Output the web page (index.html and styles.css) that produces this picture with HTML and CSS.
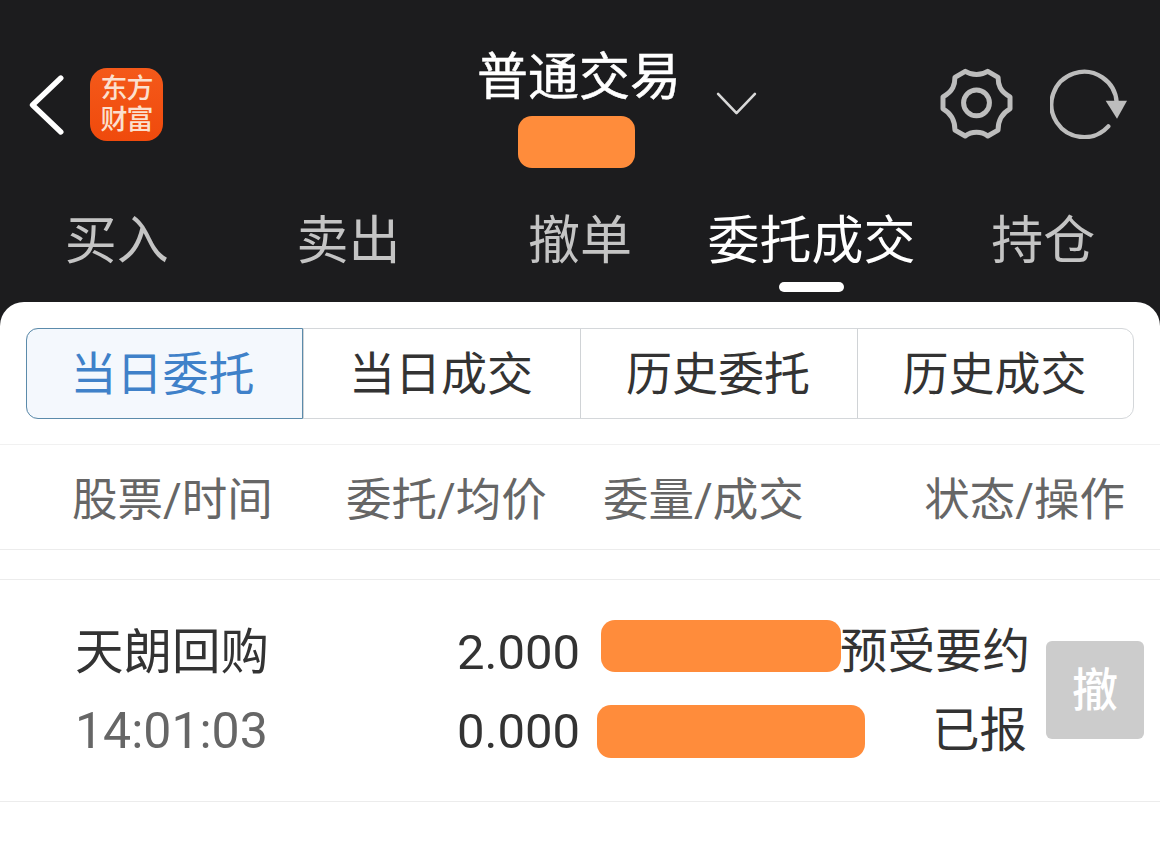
FILE: index.html
```html
<!DOCTYPE html>
<html lang="zh-CN">
<head>
    <meta charset="UTF-8">
    <meta name="viewport" content="width=device-width, initial-scale=1.0">
    <title>普通交易</title>
    <link rel="stylesheet" href="styles.css">
</head>
<body>
<div class="page">
    <header class="topbar">
        <div class="nav-left">
            <svg class="icon-back" viewBox="85 105 110 180"><path d="M183 114 L98 195 L183 276"/></svg>
            <div class="logo"><span>东方</span><span>财富</span></div>
        </div>
        <div class="title-box">
            <div class="title">普通交易</div>
            <div class="mask mask-account"></div>
        </div>
        <svg class="icon-down" viewBox="76 122 128 76"><path d="M84 131 L140 189 L196 131"/></svg>
        <div class="nav-right">
            <svg class="icon-gear" viewBox="750 56 220 212">
                <path d="M826 65 C845 78 875 78 894 65 L925 83 C925 105 930 125 961 142 L961 178 C930 195 925 220 925 242 L894 260 C875 245 845 245 826 260 L795 242 C795 220 790 195 759 178 L759 142 C790 125 795 105 795 83 Z"/>
                <circle cx="860" cy="160" r="39"/>
            </svg>
            <svg class="icon-refresh" viewBox="1080 60 234 210">
                <path class="arc" d="M1280 160 A98 98 0 1 0 1255 232"/>
                <polygon points="1247,155 1311,155 1281,209"/>
            </svg>
        </div>
    </header>

    <nav class="tabs">
        <a class="tab">买入</a>
        <a class="tab">卖出</a>
        <a class="tab">撤单</a>
        <a class="tab active">委托成交</a>
        <a class="tab">持仓</a>
    </nav>

    <main class="panel">
        <div class="segments">
            <div class="segment active">当日委托</div>
            <div class="segment">当日成交</div>
            <div class="segment">历史委托</div>
            <div class="segment">历史成交</div>
        </div>

        <div class="table-head">
            <span class="col-stock">股票/时间</span>
            <span class="col-price">委托/均价</span>
            <span class="col-volume">委量/成交</span>
            <span class="col-state">状态/操作</span>
        </div>

        <div class="order">
            <div class="order-stock">
                <div class="stock-name">天朗回购</div>
                <div class="stock-time">14:01:03</div>
            </div>
            <div class="order-price">
                <div>2.000</div>
                <div>0.000</div>
            </div>
            <div class="order-volume">
                <div class="mask mask-volume"></div>
                <div class="mask mask-deal"></div>
            </div>
            <div class="order-state">
                <div>预受要约</div>
                <div>已报</div>
            </div>
            <button class="cancel-btn">撤</button>
        </div>
    </main>
</div>
</body>
</html>
```

FILE: styles.css
```css
* {
    box-sizing: border-box;
    margin: 0;
    padding: 0;
}
body {
    font-family: Roboto, "Noto Sans CJK SC", sans-serif;
    background-color: #1c1c1e;
    color: #333;
}
.page {
    width: 1160px;
    height: 846px;
    overflow: hidden;
    background-color: #1c1c1e;
    display: flex;
    flex-direction: column;
}

/* top bar */
.topbar {
    height: 190px;
    display: flex;
    align-items: flex-start;
}
.nav-left {
    width: 478px;
    padding: 68px 0 0 28px;
    display: flex;
    align-items: center;
}
.icon-back {
    width: 37px;
    height: 60px;
    fill: none;
    stroke: #fff;
    stroke-width: 16;
    stroke-linecap: round;
    stroke-linejoin: round;
}
.logo {
    width: 73px;
    height: 73px;
    margin-left: 25px;
    border-radius: 17px;
    background: linear-gradient(180deg, #f4591a, #f04a0c);
    color: #fbe0cf;
    font-size: 27px;
    font-weight: 500;
    line-height: 31px;
    letter-spacing: -1px;
    display: flex;
    flex-direction: column;
    align-items: center;
    justify-content: center;
}
.title-box {
    width: 202px;
    display: flex;
    flex-direction: column;
    align-items: center;
}
.title {
    margin-top: 42px;
    font-size: 51px;
    line-height: 72px;
    font-weight: 400;
    -webkit-text-stroke: 0.5px #fff;
    color: #fff;
    white-space: nowrap;
}
.mask {
    background-color: #ff8c3b;
    border-radius: 14px;
}
.mask-account {
    width: 117px;
    height: 52px;
    margin-top: 2px;
    margin-left: -6px;
}
.icon-down {
    width: 43px;
    height: 25px;
    margin: 91px 0 0 35px;
    fill: none;
    stroke: #d8d8d8;
    stroke-width: 8;
    stroke-linecap: round;
    stroke-linejoin: round;
}
.nav-right {
    margin-left: auto;
    padding: 68px 32px 0 0;
    display: flex;
    align-items: center;
}
.icon-gear {
    width: 73px;
    height: 71px;
    fill: none;
    stroke: #bdbdbd;
    stroke-width: 15;
    stroke-linejoin: round;
}
.icon-refresh {
    width: 78px;
    height: 70px;
    margin-left: 37px;
    fill: #bdbdbd;
}
.icon-refresh .arc {
    fill: none;
    stroke: #bdbdbd;
    stroke-width: 13;
    stroke-linecap: round;
}

/* tabs */
.tabs {
    height: 112px;
    display: grid;
    grid-template-columns: repeat(5, 231.6px);
}
.tab {
    position: relative;
    padding-left: 2px;
    text-align: center;
    font-size: 52px;
    line-height: 104px;
    color: #c4c4c4;
}
.tab.active {
    color: #fff;
}
.tab.active::after {
    content: "";
    position: absolute;
    left: 50%;
    bottom: 10px;
    width: 65px;
    height: 10px;
    margin-left: -32px;
    border-radius: 5px;
    background-color: #fff;
}

/* white panel */
.panel {
    flex: 1;
    background-color: #fff;
    border-radius: 24px 24px 0 0;
}
.segments {
    display: grid;
    grid-template-columns: 276px 277px 277px 276px;
    height: 91px;
    margin: 26px 26px 25px;
    border: 1px solid #d4d7da;
    border-radius: 12px;
}
.segment {
    height: 89px;
    padding-right: 2px;
    text-align: center;
    font-size: 46px;
    line-height: 91px;
    color: #333;
    border-left: 1px solid #d0d3d6;
}
.segment:first-child {
    border-left: none;
}
.segment.active {
    height: 91px;
    margin: -1px 0 0 -1px;
    padding-right: 4px;
    color: #3f81c9;
    background-color: #f4f8fd;
    border: 1px solid #5b8bab;
    border-radius: 12px 0 0 12px;
}

/* list */
.table-head {
    height: 106px;
    padding-bottom: 2px;
    display: flex;
    align-items: center;
    font-size: 45.5px;
    color: #666;
    border-top: 1px solid #f1f1f1;
    border-bottom: 1px solid #ececec;
}
.col-stock {
    margin-left: 72px;
    width: 274px;
}
.col-price {
    width: 257px;
}
.col-state {
    margin-left: auto;
    margin-right: 35px;
}
.order {
    height: 223px;
    margin-top: 29px;
    display: flex;
    align-items: center;
    border-top: 1px solid #ececec;
    border-bottom: 1px solid #ececec;
    font-size: 47.5px;
    line-height: 79px;
}
.order-stock {
    margin-left: 75px;
    padding-top: 2px;
    width: 221px;
}
.stock-name {
    font-size: 48.5px;
    color: #333;
}
.stock-time {
    font-size: 50px;
    color: #666;
}
.order-price {
    width: 284px;
    padding-top: 2px;
    font-size: 49px;
    text-align: right;
}
.order-volume {
    width: 261px;
    margin: 0 0 4px -1px;
    display: flex;
    flex-direction: column;
}
.mask-volume {
    width: 240px;
    height: 52px;
    margin: 0 0 33px 22px;
}
.mask-deal {
    width: 268px;
    height: 53px;
    margin-left: 18px;
}
.order-state {
    width: 187px;
    padding-top: 2px;
    text-align: right;
    white-space: nowrap;
}
.cancel-btn {
    width: 98px;
    height: 98px;
    margin: 0 0 2px 19px;
    padding-bottom: 8px;
    border: none;
    border-radius: 6px;
    background-color: #ccc;
    color: #fff;
    font-family: inherit;
    font-size: 46px;
    font-weight: 500;
}
```
